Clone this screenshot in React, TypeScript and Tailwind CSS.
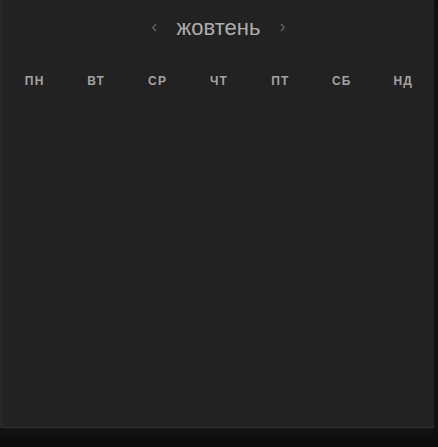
const days = ["пн", "вт", "ср", "чт", "пт", "сб", "нд"];

function Chevron({ dir }: { dir: "left" | "right" }) {
  return (
    <svg width="7" height="9" viewBox="0 0 7 9" className="text-[#5f5f5f]">
      <path
        d={dir === "left" ? "M5 1 L1.8 4.5 L5 8" : "M2 1 L5.2 4.5 L2 8"}
        fill="none"
        stroke="currentColor"
        strokeWidth="1.5"
      />
    </svg>
  );
}

export default function App() {
  return (
    <div className="h-[447px] w-[438px] bg-[#0d0d0d] font-['Liberation_Sans',Arial,sans-serif]">
      <div className="h-[428px] w-[434px] border-l-[3px] border-b border-l-[#262626] border-b-[#333] bg-[#222] shadow-[0_4px_12px_rgba(40,40,40,0.5)]">
        <div className="flex h-[56px] items-center justify-center gap-[19px] pb-[1px]">
          <Chevron dir="left" />
          <span className="text-[22px] text-[#adadad]">жовтень</span>
          <Chevron dir="right" />
        </div>
        <div className="grid grid-cols-7 pl-[1px]">
          {days.map((d) => (
            <div
              key={d}
              className="text-center text-[12px] font-bold uppercase leading-[50px] tracking-[1.2px] text-[#a3a3a3]"
            >
              {d}
            </div>
          ))}
        </div>
      </div>
    </div>
  );
}
